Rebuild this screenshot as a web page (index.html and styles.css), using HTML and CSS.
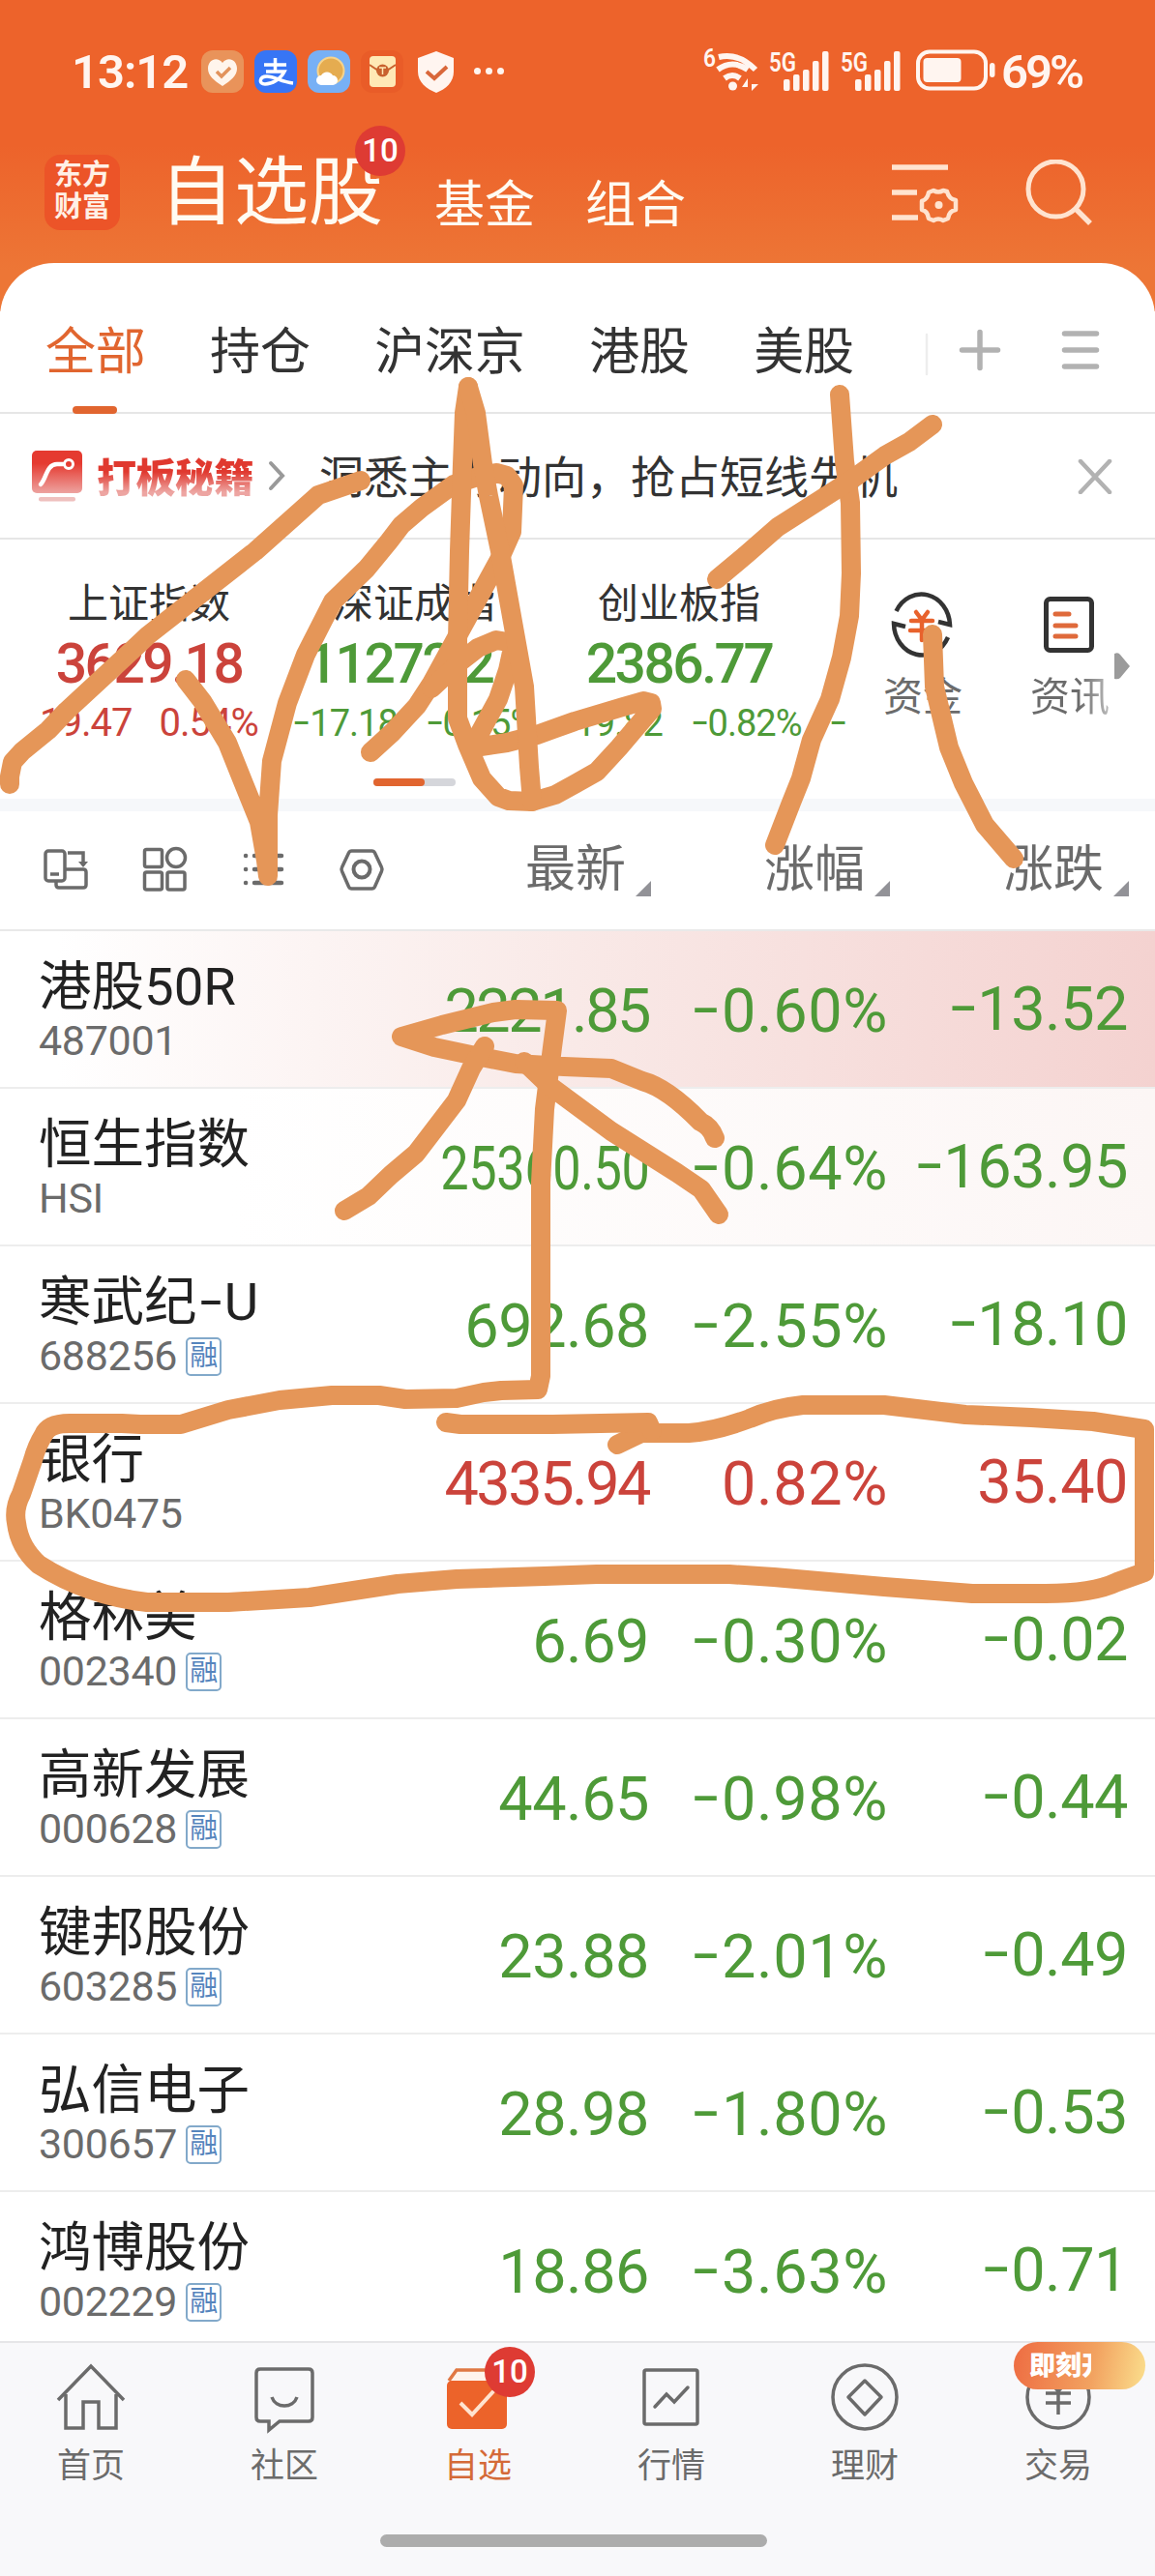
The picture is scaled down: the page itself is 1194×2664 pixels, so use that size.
FILE: index.html
```html
<!DOCTYPE html>
<html lang="zh-CN">
<head>
	<meta charset="utf-8">
	<title>自选股</title>
	<link rel="stylesheet" href="styles.css">
</head>
<body>
	<div class="screen">
	<div class="top">
		<div class="status">
			<span class="clock">13:12</span>
			<svg class="apps" width="325" height="46" viewBox="207 51 325 46">
				<rect x="208" y="52" width="44" height="44" rx="12" fill="#e9935a"/>
				<path d="M230 89c-9-6-15-11-15-18 0-10 10-13 15-6 5-7 15-4 15 6 0 7-6 12-15 18z" fill="#fff5ec"/>
				<path d="M224 74l5 5 9-9" fill="none" stroke="#e2935c" stroke-width="3.5"/>
				<rect x="263" y="52" width="44" height="44" rx="12" fill="#3775f5"/>
				<path d="M273 67h23M284.500 60v14M275 74h19c-4 8-13 13-20 13-7 0-6-8 2-8 8 0 15 6 27 7" fill="none" stroke="#fff" stroke-width="3.500"/>
				<rect x="318" y="52" width="44" height="44" rx="12" fill="#77b0f5"/>
				<circle cx="342" cy="73" r="13.500" fill="#e5ac50" stroke="#f7d38b" stroke-width="2"/>
				<path d="M332 88a5 5 0 0 1 0-10 7 7 0 0 1 12 0 5 5 0 0 1 0 10z" fill="#fff"/>
				<rect x="373" y="52" width="44" height="44" rx="12" fill="#e95c28"/>
				<rect x="382" y="58" width="27" height="32" rx="4" fill="#ffe9b5"/>
				<path d="M382 67l9 6h9l9-6" fill="none" stroke="#c9622e" stroke-width="2"/>
				<circle cx="395.500" cy="73" r="6.500" fill="#c9622e"/>
				<path d="M392 70h7M395.500 70v7" stroke="#ffe9b5" stroke-width="1.500"/>
				<path d="M451 53l18 7v14c0 11-8 18-18 22-10-4-19-11-19-22V60z" fill="#fff5f0"/>
				<path d="M441 74l8 7 13-12" fill="none" stroke="#d9673a" stroke-width="4"/>
				<g fill="#fff5f0"><circle cx="493.500" cy="73.500" r="3.500"/><circle cx="505.500" cy="73.500" r="3.500"/><circle cx="517.500" cy="73.500" r="3.500"/></g>
			</svg>
			<svg class="signals" width="304" height="56" viewBox="726 46 304 56">
				<g fill="#fff5f0" class="tiny">
					<text x="727" y="69" font-size="25" textLength="13" lengthAdjust="spacingAndGlyphs">6</text>
					<text x="795" y="74" font-size="28" textLength="28" lengthAdjust="spacingAndGlyphs">5G</text>
					<text x="869" y="74" font-size="28" textLength="28" lengthAdjust="spacingAndGlyphs">5G</text>
				</g>
				<g fill="none" stroke="#fff5f0" stroke-width="6">
					<path d="M743 59q20-5 38 13M742 72q15-11 31 0M749 81q8-6 16 0"/>
				</g>
				<circle cx="757.500" cy="89" r="4.500" fill="#fff5f0"/>
				<path d="M773 94V81l-6 9h6M777 81v13l7-7h-7" fill="#fff5f0"/>
				<g fill="#fff5f0" id="bars">
					<rect x="810" y="82" width="6.500" height="12" rx="2"/><rect x="820" y="77" width="6.500" height="17" rx="2"/><rect x="830" y="72" width="6.500" height="22" rx="2"/><rect x="840" y="63" width="6.500" height="31" rx="2"/><rect x="850" y="53" width="6.500" height="41" rx="2"/>
				</g>
				<use href="#bars" x="74"/>
				<rect x="949" y="53.500" width="70" height="38" rx="12" fill="none" stroke="#fff5f0" stroke-width="4"/>
				<rect x="954.500" y="60" width="39" height="25" rx="4" fill="#fff5f0"/>
				<rect x="1023" y="65" width="5.500" height="15" rx="3" fill="#fff5f0"/>
			</svg>
			<span class="power">69%</span>
		</div>
		<div class="titlebar">
			<div class="logo">东方<br>财富</div>
			<div class="title">自选股<span class="badge">10</span></div>
			<div class="subtitle">基金</div>
			<div class="subtitle">组合</div>
			<svg class="tools" width="208" height="72" viewBox="922 165 208 72" fill="none" stroke="#ffe3cf">
				<path d="M923 173h58M923 199h26M923 225h27" stroke-width="5.500"/>
				<path d="M966 197q5 3 10 0l4 1q2 8 9 9l0 10q-7 1-8 9l-5 2q-5-3-10 0l-5-2q-1-8-7-9v-9q6-2 7-9z" stroke-width="4.500" stroke-linejoin="round"/>
				<circle cx="971.500" cy="212" r="4" fill="#ffe3cf" stroke="none"/>
				<circle cx="1092.500" cy="195.500" r="28.500" stroke-width="5"/>
				<path d="M1113 216l15 15" stroke-width="5.500"/>
			</svg>
		</div>
	</div>

	<div class="panel">
		<div class="tabs">
			<span class="tab active">全部</span>
			<span class="tab">持仓</span>
			<span class="tab">沪深京</span>
			<span class="tab">港股</span>
			<span class="tab">美股</span>
			<svg class="tabtools" width="182" height="46" viewBox="955 339 182 46" fill="none" stroke="#b2b2b2" stroke-width="5.500" stroke-linecap="round">
				<path d="M957 346v41" stroke="#ededed" stroke-width="2.500"/>
				<path d="M1012 343.500v37M993.500 362h37M1099.500 345h33M1099.500 362h33M1099.500 379h33"/>
			</svg>
		</div>
		<div class="banner">
			<svg width="54" height="54" viewBox="32 465 54 54">
				<defs><linearGradient id="red" x1="0" y1="0" x2="0" y2="1"><stop offset=".3" stop-color="#e53a30"/><stop offset="1" stop-color="#eda3a0"/></linearGradient></defs>
				<rect x="33" y="466" width="52" height="44" rx="5" fill="url(#red)"/>
				<path d="M42 501c6-6 6-21 17-21h6" fill="none" stroke="#fff" stroke-width="4.500" stroke-linecap="round"/>
				<circle cx="71" cy="480" r="4.500" fill="none" stroke="#fff" stroke-width="3"/>
				<rect x="40" y="514" width="38" height="4.500" rx="2" fill="#efc0be"/>
			</svg>
			<span class="brand">打板秘籍</span>
			<svg class="chev" width="18" height="34" viewBox="0 0 18 34" fill="none" stroke="#999" stroke-width="4" stroke-linecap="round"><path d="M3 4l12 13L3 30"/></svg>
			<span class="slogan">洞悉主力动向，抢占短线先机</span>
			<svg class="close" width="36" height="36" viewBox="0 0 36 36" stroke="#b2b2b2" stroke-width="4.500" stroke-linecap="round"><path d="M3 2l30 32M33 2L3 34"/></svg>
		</div>
		<div class="market">
			<div class="index up">
				<div class="label">上证指数</div>
				<div class="value">3629.18</div>
				<div class="sub"><span>19.47</span><span>0.54%</span></div>
			</div>
			<div class="index down">
				<div class="label">深证成指</div>
				<div class="value">11272.27</div>
				<div class="sub"><span><i>-</i>17.18</span><span><i>-</i>0.15%</span></div>
			</div>
			<div class="index down">
				<div class="label">创业板指</div>
				<div class="value">2386.77</div>
				<div class="sub"><span><i>-</i>19.82</span><span><i>-</i>0.82%</span><span class="next"><i>-</i></span></div>
			</div>
			<div class="quick">
				<svg width="80" height="76" viewBox="913 608 80 76" fill="none">
					<path d="M926.500 631A29.500 33 0 0 1 982 645l-12-3M936 647l-12-3A29.500 33 0 0 0 980 658" stroke="#333" stroke-width="4.500"/>
					<path d="M947 632l6 8 6-8M942 641h22M941 651h22M953 640v21" stroke="#e8622c" stroke-width="4.500" stroke-linecap="round"/>
				</svg>
				<span>资金</span>
			</div>
			<div class="quick">
				<svg width="80" height="76" viewBox="1065 608 80 76" fill="none" stroke-width="5">
					<rect x="1081.500" y="618.500" width="47" height="53" rx="4" stroke="#333"/>
					<path d="M1091 634h14M1091 646h21M1091 657h21" stroke="#df6a3b" stroke-linecap="round"/>
				</svg>
				<span class="fade">资讯</span>
			</div>
			<svg class="more" width="16" height="28" viewBox="0 0 16 28"><path d="M0 1q4-2 6 1l10 12L6 26q-2 2-6 1z" fill="#9b9b9b"/></svg>
			<div class="pager"><div></div></div>
		</div>

		<div class="listhead">
			<svg width="356" height="48" viewBox="43 875 356 48" fill="none" stroke="#6b6b6b" stroke-width="3.500">
				<rect x="47" y="880" width="20" height="31" rx="3"/><path d="M52 904h9M70 882h16v13M67 899h19q3 0 3 3v13q0 3-3 3H61q-3 0-3-3v-4"/><path d="M81 891h10l-5 6z" fill="#6b6b6b" stroke="none"/>
				<rect x="149.500" y="878.500" width="18" height="18" rx="2"/><circle cx="182" cy="887" r="9.500"/><rect x="149.500" y="902" width="18" height="18" rx="2"/><rect x="173" y="902" width="18" height="18" rx="2"/>
				<path d="M263 885h28M263 899h28M263 913h28M254 885h.1M254 899h.1M254 913h.1" stroke-width="4.500" stroke-linecap="round"/>
				<path d="M363.500 880h21q2 0 3 2l7 15q1 2 0 4l-7 16q-1 2-3 2h-21q-2 0-3-2l-7-16q-1-2 0-4l7-15q1-2 3-2z"/><circle cx="374" cy="899" r="8.500" stroke-width="4"/>
			</svg>
			<span class="col c1">最新<b></b></span>
			<span class="col c2">涨幅<b></b></span>
			<span class="col c3">涨跌<b></b></span>
		</div>

		<div class="row down flash">
			<div class="stock"><div class="name">港股50R</div><div class="code">487001</div></div>
			<span class="num c1 tight">2221.85</span><span class="num c2"><i>-</i>0.60%</span><span class="num c3"><i>-</i>13.52</span>
		</div>
		<div class="row down faint">
			<div class="stock"><div class="name">恒生指数</div><div class="code">HSI</div></div>
			<span class="num c1 tighter"><u>25360.50</u></span><span class="num c2"><i>-</i>0.64%</span><span class="num c3"><i>-</i>163.95</span>
		</div>
		<div class="row down">
			<div class="stock"><div class="name">寒武纪<i>-</i>U</div><div class="code">688256<em>融</em></div></div>
			<span class="num c1">692.68</span><span class="num c2"><i>-</i>2.55%</span><span class="num c3"><i>-</i>18.10</span>
		</div>
		<div class="row up">
			<div class="stock"><div class="name">银行</div><div class="code">BK0475</div></div>
			<span class="num c1 tight">4335.94</span><span class="num c2">0.82%</span><span class="num c3">35.40</span>
		</div>
		<div class="row down">
			<div class="stock"><div class="name">格林美</div><div class="code">002340<em>融</em></div></div>
			<span class="num c1">6.69</span><span class="num c2"><i>-</i>0.30%</span><span class="num c3"><i>-</i>0.02</span>
		</div>
		<div class="row down">
			<div class="stock"><div class="name">高新发展</div><div class="code">000628<em>融</em></div></div>
			<span class="num c1">44.65</span><span class="num c2"><i>-</i>0.98%</span><span class="num c3"><i>-</i>0.44</span>
		</div>
		<div class="row down">
			<div class="stock"><div class="name">键邦股份</div><div class="code">603285<em>融</em></div></div>
			<span class="num c1">23.88</span><span class="num c2"><i>-</i>2.01%</span><span class="num c3"><i>-</i>0.49</span>
		</div>
		<div class="row down">
			<div class="stock"><div class="name">弘信电子</div><div class="code">300657<em>融</em></div></div>
			<span class="num c1">28.98</span><span class="num c2"><i>-</i>1.80%</span><span class="num c3"><i>-</i>0.53</span>
		</div>
		<div class="row down last">
			<div class="stock"><div class="name">鸿博股份</div><div class="code">002229<em>融</em></div></div>
			<span class="num c1">18.86</span><span class="num c2"><i>-</i>3.63%</span><span class="num c3"><i>-</i>0.71</span>
		</div>
	</div>

	<div class="nav">
		<div class="items">
			<div class="item">
				<svg width="76" height="76" viewBox="-38 -38 76 76"><path d="M-34 2L0-33 34 2M-26-4V31H-8V4H8V31H26V-4"/></svg>
				首页
			</div>
			<div class="item">
				<svg width="76" height="76" viewBox="-38 -38 76 76"><path d="M-25-30H25Q29-30 29-26V20Q29 24 25 24H-5L-16 33V24H-25Q-29 24-29 20V-26Q-29-30-25-30z"/><path d="M-13-1C-9 11 9 11 13-1"/></svg>
				社区
			</div>
			<div class="item on">
				<svg width="76" height="76" viewBox="-38 -38 76 76"><path d="M-30-18L-22-29H27V-18" fill="#fff4ec" stroke="#e07843"/><rect x="-32" y="-18" width="62" height="50" rx="5" fill="#ec632a" stroke="none"/><path d="M-18 5L-6 17 17-8" stroke="#ffe3cf" stroke-width="4"/></svg>
				自选<span class="badge">10</span>
			</div>
			<div class="item">
				<svg width="76" height="76" viewBox="-38 -38 76 76"><rect x="-28" y="-29" width="55" height="56" rx="2"/><path d="M-17 9L-5-4 3 4 17-11" stroke-linecap="round"/></svg>
				行情
			</div>
			<div class="item">
				<svg width="76" height="76" viewBox="-38 -38 76 76"><circle cy="-1" r="33"/><path d="M0-18L17-1 0 17-17-1z" stroke-linejoin="round"/></svg>
				理财
			</div>
			<div class="item">
				<svg width="76" height="76" viewBox="-38 -38 76 76"><circle cy="-1" r="32"/><path d="M-9-17L0-7 9-17M-13-5H13M-13 5H13M0-8V17"/></svg>
				交易<span class="promo"><s>即刻开</s></span>
			</div>
		</div>
		<div class="homebar"></div>
	</div>

	<!-- pen marks over the whole screen -->
	<svg class="pen" width="1194" height="2664" viewBox="0 0 1194 2664">
		<path d="M373 497L329 512 264 570 153 657 136 673 69 735 50 755 23 777 13 788 10 803V811"/>
		<path d="M192 703L209 725 235 768 251 808 268 850 275 890 277 906V843L281 787 297 727 316 677 344 622 379 588 402 560 415 543 436 525 469 501 497 492 513 489 524 492 531 502 529 550 517 577 476 652 446 707 431 730 406 757 383 778"/>
		<path d="M484 400L480 427 478 480 475 570 473 663V743L483 770 498 805 515 824 526 828 550 829 574 822 594 811 617 798 640 773 674 733 673 727 665 725 644 731 594 746 555 760 524 768 497 772 496 758 515 723 525 693 531 665 513 662 494 670 476 684 446 712"/>
		<path d="M484 400L492 427 499 480 505 513 517 570 530 643 542 710 547 793 550 829"/>
		<path d="M868 408L873 477 879 520 880 593 878 637 870 680 858 723 839 765 828 805 818 830 801 874"/>
		<path d="M964 439L940 457 915 471 879 497 804 545 772 573 741 599"/>
		<path d="M964 656L966 710 981 773 996 810 1018 853 1048 888"/>
		<path d="M739 1177Q735 1165 724 1160Q690 1125 664 1118L632 1105 583 1103 533 1100 487 1091 449 1083 415 1072 457 1060 510 1047 533 1044 576 1045 571 1083 563 1147 559 1223V1423L556 1437 518 1438 500 1440 472 1446 419 1447 392 1443 343 1443 289 1448 236 1458 187 1473H145L126 1472H72Q50 1472 45 1484Q38 1495 34 1510L22 1545Q14 1560 17 1575Q20 1600 40 1618Q90 1650 152 1657H236L320 1652 411 1638 472 1633 563 1630 617 1628H754L800 1631 914 1641 1005 1648H1081Q1130 1648 1155 1636L1183 1626V1478L1130 1470 1066 1466 998 1463 914 1453H830Q800 1456 775 1467Q740 1480 712 1482H663L638 1494"/>
		<path d="M461 1471L476 1473H571L670 1471 674 1480"/>
		<path d="M501 1082L487 1105 472 1138 430 1193 404 1215 381 1237 356 1252"/>
		<path d="M542 1098L567 1122 632 1170 700 1213 725 1230 743 1256"/>
	</svg>
	</div>
</body>
</html>
```

FILE: styles.css
```css
body{
	margin: 0;
	font-family: Roboto, "Noto Sans CJK SC", sans-serif;
	color: #333;
}
.screen{
	position: relative;
	width: 1194px;
	height: 2664px;
	overflow: hidden;
	background: #fff;
	white-space: nowrap;
}
svg{
	display: block;
	flex: none;
}
i{
	display: inline-block;
	font-style: normal;
	transform: translate(.03em, -.04em) scaleX(1.5);
	margin: 0 .14em 0 .1em;
}
.top{
	box-sizing: border-box;
	height: 322px;
	padding-top: 44px;
	background: linear-gradient(#ed632b 150px, #ed7636 280px);
}
.status{
	display: flex;
	align-items: center;
	height: 60px;
	padding-left: 74px;
	color: #fff5f0;
	font-size: 49px;
	font-weight: 600;
}
.clock{
	width: 133px;
	letter-spacing: -1px;
}
.apps{
	margin-right: 194px;
}
.signals{
	margin-right: 5px;
}
.power{
	letter-spacing: -3px;
}
.tiny{
	font-weight: 600;
}
.titlebar{
	display: flex;
	padding: 56px 0 0 46px;
	color: #fffbf2;
}
.logo{
	box-sizing: border-box;
	width: 78px;
	height: 78px;
	padding-top: 5px;
	border-radius: 16px;
	background: #ec5428;
	color: #fff0e6;
	font-size: 29px;
	font-weight: 700;
	line-height: 33px;
	text-align: center;
}
.title{
	position: relative;
	margin: 0 0 0 41px;
	width: 284px;
	font-size: 77px;
	line-height: 80px;
}
.subtitle{
	margin-top: 21px;
	width: 156px;
	font-size: 52px;
	line-height: 64px;
}
.badge{
	position: absolute;
	left: 202px;
	top: -30px;
	width: 52px;
	height: 52px;
	border-radius: 50%;
	background: #de3b33;
	color: #fff;
	font-size: 33px;
	font-weight: 500;
	line-height: 52px;
	text-align: center;
}
.tools{
	margin: 5px 0 0 160px;
}
.panel{
	margin-top: -50px;
	border-radius: 56px 56px 0 0;
	background: #fff;
}
.tabs{
	display: flex;
	box-sizing: border-box;
	height: 156px;
	padding: 57px 0 0 47px;
	border-bottom: 2px solid #e6e6e6;
	font-size: 52px;
	line-height: 72px;
}
.tab{
	margin-right: 66.500px;
	letter-spacing: -.2px;
}
.active{
	position: relative;
	color: #e1652f;
}
.active::after{
	content: "";
	position: absolute;
	left: 28px;
	top: 91px;
	width: 46px;
	height: 8px;
	border-radius: 4px;
	background: #e1652f;
}
.tabtools{
	margin: 10px 0 0 7px;
	overflow: visible;
}
.banner{
	display: flex;
	align-items: center;
	box-sizing: border-box;
	height: 130px;
	padding-left: 32px;
	border-bottom: 2px solid #e6e6e6;
}
.brand{
	margin: -3px 0 0 14px;
	font-size: 41px;
	font-weight: 900;
	letter-spacing: -.5px;
	background: linear-gradient(#e0392f 45%, #eda5a2 80%);
	-webkit-background-clip: text;
	color: transparent;
}
.chev{
	margin: 0 35px 0 15px;
}
.slogan{
	width: 784px;
	margin-top: -5px;
	font-size: 46px;
}
.close{
	margin-top: 2px;
}
.market{
	position: relative;
	display: flex;
	box-sizing: border-box;
	height: 281px;
	padding: 35px 0 0 17px;
	border-bottom: 13px solid #f6f8fa;
}
.index{
	flex: none;
	width: 274px;
	text-align: center;
}
.label{
	height: 62px;
	font-size: 42px;
	line-height: 63px;
}
.value{
	height: 63px;
	font-size: 57px;
	font-weight: 500;
	line-height: 63px;
	letter-spacing: -2.500px;
}
.sub{
	display: flex;
	justify-content: center;
	gap: 28px;
	margin: 0 -20px;
	font-size: 38px;
	line-height: 60px;
	letter-spacing: -1px;
}
.index.up .sub{
	font-size: 40px;
}
.next{
	margin-right: -47px;
}
.up .value, .up .sub, .up .num{
	color: #cb433b;
}
.down .value, .down .sub, .down .num{
	color: #4e9a38;
}
.quick{
	flex: none;
	width: 152px;
	padding-top: 16px;
	font-size: 41px;
	line-height: 72px;
	color: #6b6b6b;
}
.quick:nth-child(4){
	margin-left: 74px;
}
.fade{
	background: linear-gradient(90deg, #6b6b6b 50px, #bbb 82px);
	-webkit-background-clip: text;
	color: transparent;
}
.more{
	position: absolute;
	left: 1152px;
	top: 117px;
}
.pager{
	position: absolute;
	left: 386px;
	top: 247px;
	width: 85px;
	height: 8px;
	border-radius: 4px;
	background: #d5d6db;
}
.pager div{
	width: 53px;
	height: 8px;
	border-radius: 4px;
	background: #e1652f;
}
.listhead{
	display: flex;
	align-items: center;
	box-sizing: border-box;
	height: 124px;
	padding-left: 43px;
	border-bottom: 2px solid #e9e9e9;
	color: #6b6b6b;
	font-size: 52px;
}
.listhead svg{
	margin-top: -2px;
}
.col{
	display: flex;
	justify-content: flex-end;
	align-items: flex-end;
	line-height: 76px;
}
.col b{
	margin: 0 0 11px 10px;
	border-left: 16px solid transparent;
	border-bottom: 16px solid #929297;
}
.listhead .c1{
	width: 274px;
}
.c2{
	width: 247px;
}
.c3{
	width: 247px;
}
.row{
	display: flex;
	box-sizing: border-box;
	height: 163px;
	padding-left: 40px;
	border-bottom: 2px solid #ededed;
}
.flash{
	background: linear-gradient(90deg, #fff 5%, #f9e9e7 50%, #f4d2d0);
}
.faint{
	background: linear-gradient(90deg, #fff 20%, #fcf6f5);
}
.stock{
	width: 329px;
}
.name{
	margin-top: 21px;
	height: 71px;
	font-size: 54.500px;
	line-height: 73px;
	color: #222;
}
.code{
	display: flex;
	align-items: center;
	height: 41px;
	font-size: 43px;
	color: #6b6b6b;
	letter-spacing: -.300px;
}
.code em{
	box-sizing: border-box;
	width: 37px;
	height: 40px;
	margin: 2px 0 0 9px;
	border: 2px solid #82a9ca;
	border-radius: 5px;
	color: #5585bd;
	font-size: 29px;
	font-style: normal;
	line-height: 35px;
	text-align: center;
}
.num{
	padding-top: 46px;
	font-size: 63px;
	line-height: 74px;
	letter-spacing: -.500px;
	text-align: right;
}
.num.c1{
	width: 302px;
}
.num.c2{
	letter-spacing: .600px;
}
.num.c3{
	padding-top: 44px;
	width: 248px;
}
.num.tight{
	letter-spacing: -2.500px;
}
.tighter u{
	display: inline-block;
	text-decoration: none;
	transform: scaleX(.83);
	transform-origin: right;
}
.nav{
	position: absolute;
	left: 0;
	top: 2421px;
	box-sizing: border-box;
	width: 1194px;
	height: 243px;
	border-top: 2px solid #e6e6e8;
	background: #f8f8fa;
}
.items{
	display: grid;
	grid-template-columns: repeat(6, 200px);
	margin-left: -6px;
}
.item{
	position: relative;
	padding-top: 19px;
	color: #6b6b6b;
	font-size: 35px;
	line-height: 65px;
	text-align: center;
}
.item svg{
	margin: 0 auto;
	fill: none;
	stroke: #6b6b6b;
	stroke-width: 3.500;
}
.on{
	color: #d46a38;
}
.item .badge{
	left: 107px;
	top: 4px;
}
.promo{
	position: absolute;
	left: 54px;
	top: -1px;
	box-sizing: border-box;
	width: 136px;
	height: 49px;
	padding-left: 16px;
	border-radius: 25px;
	background: linear-gradient(100deg, #ee6c42, #f2a260 60%, #fbdf8d);
	color: #fff;
	font-size: 27px;
	font-weight: 900;
	line-height: 51px;
	text-align: left;
}
.promo s{
	display: block;
	width: 64px;
	overflow: hidden;
	text-decoration: none;
}
.homebar{
	margin: 38px 0 0 393px;
	width: 400px;
	height: 13px;
	border-radius: 7px;
	background: #acacac;
}
.pen{
	position: absolute;
	left: 0;
	top: 0;
	z-index: 5;
	fill: none;
	stroke: #e59658;
	stroke-width: 20;
	stroke-linecap: round;
	stroke-linejoin: round;
}
```
